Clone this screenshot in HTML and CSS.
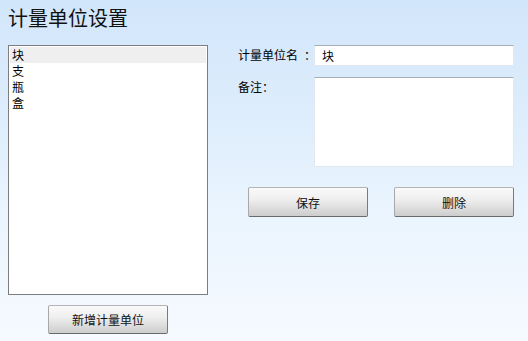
FILE: index.html
```html
<!DOCTYPE html>
<html lang="zh-CN">
<head>
<meta charset="utf-8">
<title>计量单位设置</title>
<link rel="stylesheet" href="styles.css">
</head>
<body>
<div class="page">
  <h1 class="title">计量单位设置</h1>
  <div class="main">
    <div class="left">
      <div class="list">
        <div class="item sel">块</div>
        <div class="item">支</div>
        <div class="item">瓶</div>
        <div class="item">盒</div>
      </div>
      <button class="btn add">新增计量单位</button>
    </div>
    <div class="right">
      <div class="row">
        <div class="label">计量单位名<span class="colon">：</span></div>
        <div class="input">块</div>
      </div>
      <div class="row row2">
        <div class="label">备注：</div>
        <div class="textarea"></div>
      </div>
      <div class="actions">
        <button class="btn">保存</button>
        <button class="btn del">删除</button>
      </div>
    </div>
  </div>
</div>
</body>
</html>
```

FILE: styles.css
```css
html, body {
  margin: 0;
  padding: 0;
  height: 100%;
}
body {
  background: linear-gradient(to bottom, #d2e6fb 0%, #dcecfc 30%, #e9f4fe 60%, #f6faff 100%);
  font-family: "Noto Sans CJK SC", "DejaVu Sans", sans-serif;
  font-size: 12px;
  color: #000;
}
.page {
  padding: 0 8px;
}
.title {
  margin: 0;
  font-weight: normal;
  font-size: 20px;
  line-height: 24px;
  padding-top: 6px;
  height: 39px;
  color: #111;
}
.main {
  display: flex;
}
.left {
  flex: none;
  width: 200px;
  display: flex;
  flex-direction: column;
  align-items: center;
}
.list {
  width: 200px;
  height: 250px;
  box-sizing: border-box;
  border: 1px solid #7d7d7d;
  background: #fff;
  padding: 1px;
}
.item {
  height: 16px;
  line-height: 16px;
  padding-left: 2px;
}
.item.sel {
  background: #efefef;
}
.btn {
  flex: none;
  display: block;
  width: 120px;
  height: 30px;
  box-sizing: border-box;
  border: 1px solid #8a8a8a;
  border-top-color: #b4b4b4;
  border-left-color: #a8a8a8;
  border-bottom-color: #6a6a6a;
  border-right-color: #7a7a7a;
  border-radius: 2px;
  background: linear-gradient(to bottom, #fafafa 0%, #efefef 40%, #dedede 70%, #cdcdcd 100%);
  font-family: "Noto Sans CJK SC", "DejaVu Sans", sans-serif;
  font-size: 12px;
  color: #111;
  padding: 0;
  margin: 0;
}
.add {
  margin-top: 10px;
  height: 29px;
}
.right {
  flex: none;
  margin-left: 30px;
  width: 276px;
}
.row {
  display: flex;
}
.label {
  flex: none;
  width: 76px;
  line-height: 16px;
  padding-top: 2px;
  white-space: nowrap;
}
.colon {
  margin-left: 6px;
}
.input {
  flex: none;
  width: 200px;
  height: 21px;
  box-sizing: border-box;
  background: #fff;
  border: 1px solid #e2e8ef;
  border-top-color: #a7adb4;
  padding: 2px 0 0 7px;
  line-height: 16px;
}
.row2 {
  margin-top: 11px;
}
.textarea {
  flex: none;
  width: 200px;
  height: 90px;
  box-sizing: border-box;
  background: #fff;
  border: 1px solid #e2e8ef;
  border-top-color: #a7adb4;
}
.actions {
  display: flex;
  margin-top: 20px;
  padding-left: 10px;
}
.del {
  margin-left: 26px;
}
```
